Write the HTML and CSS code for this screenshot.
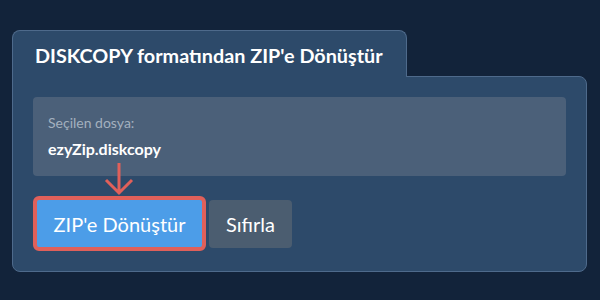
FILE: index.html
```html
<!DOCTYPE html>
<html lang="tr">
<head>
<meta charset="utf-8">
<link rel="stylesheet" href="styles.css">
</head>
<body>
<div class="wrap">
  <div class="tab">DISKCOPY formatından ZIP'e Dönüştür</div>
  <div class="panel">
    <div class="filebox">
      <div class="label">Seçilen dosya:</div>
      <div class="filename">ezyZip.diskcopy</div>
    </div>
    <div class="actions">
      <svg class="arrow" width="30" height="34" viewBox="0 0 30 34">
        <path d="M15 1 V31 M2 18 L15 31 L28 18" fill="none" stroke="#e0605a" stroke-width="3"/>
      </svg>
      <button class="btn btn-convert">ZIP'e Dönüştür</button>
      <button class="btn btn-reset">Sıfırla</button>
    </div>
  </div>
</div>
</body>
</html>
```

FILE: styles.css
```css
html, body {
  margin: 0;
  padding: 0;
  background: #12233a;
  width: 600px;
  height: 300px;
  overflow: hidden;
  font-family: Lato, "Noto Sans", sans-serif;
}
.wrap {
  padding: 30px 0 0 12px;
  width: 575px;
  display: flex;
  flex-direction: column;
  align-items: flex-start;
}
.tab {
  position: relative;
  z-index: 1;
  box-sizing: border-box;
  background: #2d4a6a;
  border: 1px solid #4e6a8b;
  border-bottom: none;
  border-radius: 8px 8px 0 0;
  padding: 1px 23px 0 22px;
  height: 47px;
  line-height: 46px;
  margin-bottom: -1px;
  color: #ffffff;
  font-weight: 700;
  font-size: 19.8px;
}
.panel {
  box-sizing: border-box;
  width: 575px;
  background: #2d4a6a;
  border: 1px solid #4e6a8b;
  border-radius: 0 8px 8px 8px;
  padding: 20px;
}
.filebox {
  background: #4b6079;
  border-radius: 4px;
  padding: 17px 15px 17px 15px;
}
.label {
  color: #a3b0bf;
  font-size: 14px;
  line-height: 18px;
}
.filename {
  margin-top: 7px;
  color: #ffffff;
  font-weight: 700;
  font-size: 16px;
  line-height: 20px;
}
.actions {
  position: relative;
  margin-top: 20px;
  display: flex;
  align-items: center;
  gap: 3px;
}
.arrow {
  position: absolute;
  left: 71px;
  top: -34px;
}
.btn {
  font-family: Lato, "Noto Sans", sans-serif;
  font-size: 20px;
  color: #ffffff;
  border: none;
  border-radius: 4px;
  cursor: pointer;
  box-sizing: border-box;
  padding: 0;
}
.btn-convert {
  background: #4c9de8;
  border: 4px solid #e0605a;
  border-radius: 6px;
  width: 173px;
  height: 55px;
}
.btn-reset {
  background: #4b5d70;
  width: 83px;
  height: 48px;
}
```
